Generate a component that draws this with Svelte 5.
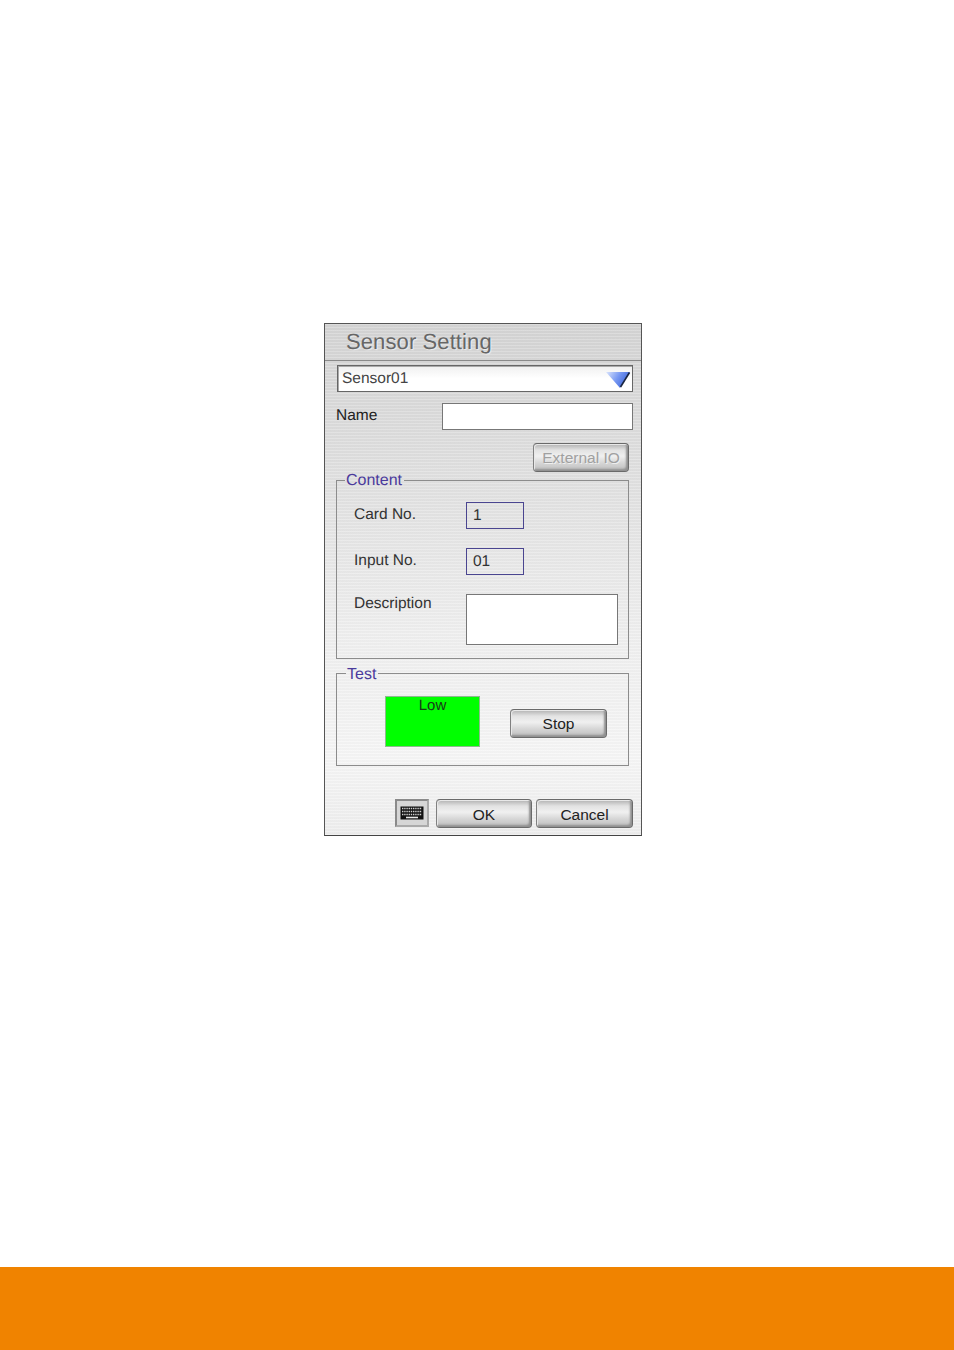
<script>
  let sensor = 'Sensor01';
  const keyRows = [0, 1, 2];
</script>

<div class="page">
  <section class="dialog">
    <header class="title">Sensor Setting</header>

    <div class="select">
      <span>{sensor}</span>
      <svg width="26" height="19" viewBox="0 0 26 19" aria-hidden="true">
        <defs>
          <linearGradient id="arrow" x1="0" y1="0" x2="1" y2="0.4">
            <stop offset="0" stop-color="#dbe5fc" />
            <stop offset="0.55" stop-color="#7596f2" />
            <stop offset="1" stop-color="#3f66d8" />
          </linearGradient>
        </defs>
        <path d="M1 2 H25 L15 18 Z" fill="url(#arrow)" />
        <path d="M24.5 2.5 L15.5 17" stroke="#1a2540" stroke-width="1.6" fill="none" />
      </svg>
    </div>

    <div class="name-row">
      <label for="name">Name</label>
      <input id="name" class="field" />
    </div>

    <div class="io-row">
      <button class="btn disabled">External IO</button>
    </div>

    <fieldset class="group content">
      <legend>Content</legend>
      <div class="row first">
        <span class="lbl">Card No.</span>
        <div class="num">1</div>
      </div>
      <div class="row">
        <span class="lbl">Input No.</span>
        <div class="num">01</div>
      </div>
      <div class="row desc">
        <span class="lbl">Description</span>
        <div class="area"></div>
      </div>
    </fieldset>

    <fieldset class="group test">
      <legend>Test</legend>
      <div class="test-row">
        <div class="state">Low</div>
        <button class="btn stop">Stop</button>
      </div>
    </fieldset>

    <footer class="actions">
      <button class="kbd" aria-label="Keyboard">
        <svg width="24" height="14" viewBox="0 0 24 14" aria-hidden="true">
          <rect x="0.5" y="0.5" width="23" height="13" fill="#111" />
          {#each keyRows as r}
            <path d="M2 {2.5 + r * 3} H22" stroke="#cfcfcf" stroke-width="1.4" stroke-dasharray="1.4 0.8" />
          {/each}
          <path d="M6 11.5 H18" stroke="#e8e8e8" stroke-width="1.6" />
        </svg>
      </button>
      <button class="btn low">OK</button>
      <button class="btn low cancel">Cancel</button>
    </footer>
  </section>

  <div class="bar"></div>
</div>

<style>
  :global(body) {
    margin: 0;
    background: #fff;
  }
  .page {
    height: 1350px;
    display: flex;
    flex-direction: column;
    font-family: "Liberation Sans", Arial, sans-serif;
    color: #2b2b2b;
    box-sizing: border-box;
    padding-top: 323px;
    text-rendering: geometricPrecision;
  }
  .dialog {
    box-sizing: border-box;
    width: 318px;
    height: 513px;
    margin-left: 324px;
    border: 1px solid #555;
    border-bottom-color: #444;
    background:
      repeating-linear-gradient(to bottom, rgba(255,255,255,0.18) 0 1px, rgba(120,120,120,0.03) 1px 3px),
      linear-gradient(to bottom, #d4d4d4 0%, #dedede 25%, #efefef 60%, #f6f6f6 85%, #eeeeee 100%);
  }
  .title {
    height: 37px;
    box-sizing: border-box;
    padding: 5px 0 0 21px;
    font-size: 22px;
    line-height: 26px;
    letter-spacing: 0.1px;
    color: #666;
    text-shadow: 1px 1px 1px #eee;
    border-bottom: 1px solid #8a8a8a;
  }
  .select {
    box-sizing: border-box;
    height: 27px;
    margin: 4px 8px 0 12px;
    padding: 1px 1px 0 4px;
    display: flex;
    align-items: center;
    justify-content: space-between;
    font-size: 15.5px;
    color: #444;
    background: linear-gradient(to bottom, #f0f0f0, #fff 50%);
    border: 1px solid #666;
    box-shadow: inset 1px 1px 0 #aaa;
  }
  .name-row {
    display: flex;
    justify-content: space-between;
    align-items: flex-start;
    margin: 11px 8px 0 11px;
  }
  .name-row label {
    font-size: 15.5px;
    line-height: 24px;
    padding-top: 1px;
    color: #222;
  }
  .field {
    box-sizing: border-box;
    width: 191px;
    height: 27px;
    background: #fff;
    border: 1px solid #777;
    padding: 0;
    outline: none;
  }
  .io-row {
    display: flex;
    justify-content: flex-end;
    margin: 13px 12px 0 0;
  }
  .btn {
    box-sizing: border-box;
    width: 96px;
    height: 29px;
    padding: 1px 0 0;
    font-family: inherit;
    font-size: 15.5px;
    color: #222;
    border: 1px solid #6a6a6a;
    border-left-color: #808080;
    border-radius: 4px;
    background: linear-gradient(to bottom, #b0b0b0 0%, #e2e2e2 22%, #f0f0f0 45%, #d6d6d6 70%, #bcbcbc 100%);
    box-shadow: inset 1px 1px 0 #e8e8e8, inset -2px -2px 2px #909090;
  }
  .btn.low {
    padding-top: 3px;
  }
  .btn.disabled {
    color: #a0a0a0;
    text-shadow: 1px 1px 0 #eee;
  }
  .group {
    box-sizing: border-box;
    width: 293px;
    margin: 0 0 0 11px;
    padding: 0;
    border: 1px solid #8c8c8c;
    min-inline-size: 0;
  }
  .group legend {
    position: relative;
    top: 1px;
    padding: 0 2px 0 1px;
    margin-left: 8px;
    font-size: 16px;
    line-height: 16px;
    color: #4a3a9c;
  }
  .content {
    height: 187px;
    margin-top: 0;
  }
  .row {
    display: flex;
    align-items: center;
    margin: 19px 0 0 17px;
    height: 27px;
  }
  .row.first {
    margin-top: 14px;
  }
  .lbl {
    width: 112px;
    font-size: 15.5px;
    position: relative;
    top: -1px;
    color: #333;
  }
  .num {
    box-sizing: border-box;
    width: 58px;
    height: 27px;
    border: 1px solid #4a4590;
    padding-left: 6px;
    font-size: 15.5px;
    line-height: 26px;
    color: #333;
  }
  .row.desc {
    height: 51px;
    align-items: flex-start;
  }
  .row.desc .lbl {
    line-height: 17px;
    top: 1px;
  }
  .area {
    box-sizing: border-box;
    width: 152px;
    height: 51px;
    background: #fff;
    border: 1px solid #777;
  }
  .test {
    height: 101px;
    margin-top: 6px;
  }
  .test legend {
    margin-left: 9px;
    top: 2px;
  }
  .test-row {
    display: flex;
    align-items: flex-start;
    gap: 30px;
    margin: 15px 0 0 48px;
  }
  .state {
    box-sizing: border-box;
    width: 95px;
    height: 51px;
    padding-top: 1px;
    background: #00ff00;
    border: 1px solid #8fb98f;
    font-size: 15px;
    line-height: 15px;
    text-align: center;
    color: #1a3a1a;
  }
  .stop {
    width: 97px;
    margin-top: 13px;
  }
  .actions {
    display: flex;
    align-items: flex-start;
    justify-content: flex-end;
    gap: 4px;
    margin: 33px 8px 0 0;
  }
  .kbd {
    box-sizing: border-box;
    width: 34px;
    height: 28px;
    margin-right: 3px;
    padding: 0;
    display: flex;
    align-items: center;
    justify-content: center;
    background: #d6d6d6;
    border: 2px solid #8a8a8a;
    border-right-color: #aaa;
    border-bottom-color: #aaa;
  }
  .cancel {
    width: 97px;
  }
  .bar {
    margin-top: auto;
    height: 83px;
    background: #f08300;
  }
</style>
